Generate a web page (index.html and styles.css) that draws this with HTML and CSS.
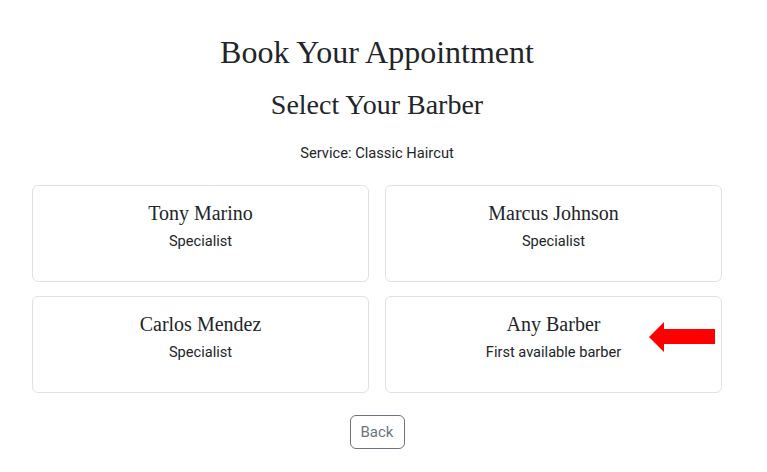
FILE: index.html
```html
<!DOCTYPE html>
<html lang="en">
<head>
<meta charset="utf-8">
<title>Book Your Appointment</title>
<link rel="stylesheet" href="styles.css">
</head>
<body>
<main class="page">
  <h1 class="title">Book Your Appointment</h1>
  <h2 class="subtitle">Select Your Barber</h2>
  <p class="service">Service: Classic Haircut</p>
  <div class="grid">
    <div class="card">
      <h3 class="name">Tony Marino</h3>
      <p class="role">Specialist</p>
    </div>
    <div class="card">
      <h3 class="name">Marcus Johnson</h3>
      <p class="role">Specialist</p>
    </div>
    <div class="card">
      <h3 class="name">Carlos Mendez</h3>
      <p class="role">Specialist</p>
    </div>
    <div class="card card-any">
      <h3 class="name">Any Barber</h3>
      <p class="role">First available barber</p>
      <svg class="arrow" width="66" height="30" viewBox="0 0 66 30">
        <polygon points="0,15 15,0 15,7 66,7 66,22 15,22 15,30" fill="#ff0000"/>
      </svg>
    </div>
  </div>
  <div class="actions">
    <button class="back" type="button">Back</button>
  </div>
</main>
</body>
</html>
```

FILE: styles.css
```css
html, body {
  margin: 0;
  padding: 0;
  background: #ffffff;
}
body {
  font-family: Roboto, "Liberation Sans", sans-serif;
  color: #212529;
}
.page {
  width: 754px;
  padding: 32px 0 0;
  box-sizing: border-box;
  display: flex;
  flex-direction: column;
  align-items: center;
}
.title {
  font-family: "Liberation Serif", serif;
  font-weight: 400;
  font-size: 32px;
  line-height: 40px;
  margin: 0 0 15px;
}
.subtitle {
  font-family: "Liberation Serif", serif;
  font-weight: 400;
  font-size: 28px;
  line-height: 36px;
  margin: 0 0 20px;
}
.service {
  font-size: 14.7px;
  line-height: 20px;
  margin: 0 0 22px;
}
.grid {
  width: 690px;
  display: grid;
  grid-template-columns: 1fr 1fr;
  column-gap: 16px;
  row-gap: 14px;
}
.card {
  position: relative;
  height: 97px;
  box-sizing: border-box;
  border: 1px solid #dee2e6;
  border-radius: 6px;
  padding: 14px 16px;
  text-align: center;
}
.name {
  font-family: "Liberation Serif", serif;
  font-weight: 400;
  font-size: 20px;
  line-height: 26px;
  margin: 0 0 5px;
}
.role {
  font-size: 14.6px;
  line-height: 20px;
  margin: 0;
}
.arrow {
  position: absolute;
  left: 263px;
  top: 25px;
}
.actions {
  margin-top: 22px;
}
.back {
  font-family: Roboto, "Liberation Sans", sans-serif;
  font-size: 15px;
  color: #6c757d;
  background: #fff;
  border: 1px solid #6c757d;
  border-radius: 6px;
  height: 34px;
  width: 55px;
  padding: 0;
}
```
